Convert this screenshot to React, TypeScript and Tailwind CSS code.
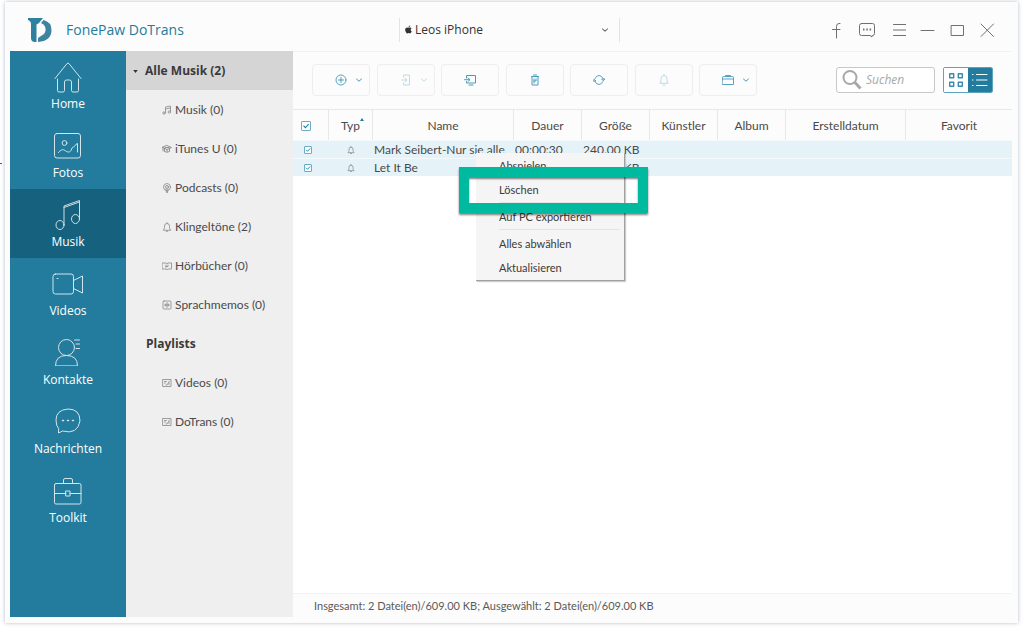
import { useState, type ReactNode } from "react";
import { FaApple } from "react-icons/fa";

const navItems = [
  { name: "Home", icon: <HomeIcon /> },
  { name: "Fotos", icon: <PhotoIcon /> },
  { name: "Musik", icon: <MusicIcon /> },
  { name: "Videos", icon: <VideoIcon /> },
  { name: "Kontakte", icon: <ContactIcon /> },
  { name: "Nachrichten", icon: <MessageIcon /> },
  { name: "Toolkit", icon: <ToolkitIcon /> },
];

const categories = [
  { name: "Musik (0)", icon: <SmallNotes /> },
  { name: "iTunes U (0)", icon: <SmallCap /> },
  { name: "Podcasts (0)", icon: <SmallPodcast /> },
  { name: "Klingeltöne (2)", icon: <Bell /> },
  { name: "Hörbücher (0)", icon: <SmallBook /> },
  { name: "Sprachmemos (0)", icon: <SmallMemo /> },
];

const playlists = ["Videos (0)", "DoTrans (0)"];

const tracks = [
  { name: "Mark Seibert-Nur sie alle", duration: "00:00:30", size: "240.00 KB" },
  { name: "Let It Be", duration: "", size: "369.00 KB" },
];

function Icon({
  size,
  className,
  children,
}: {
  size: number;
  className: string;
  children: ReactNode;
}) {
  return (
    <svg
      viewBox={`0 0 ${size} ${size}`}
      className={className}
      fill="none"
      stroke="currentColor"
      strokeLinecap="round"
      strokeLinejoin="round"
      aria-hidden="true"
    >
      {children}
    </svg>
  );
}

/* Sidebar icons */

function HomeIcon() {
  return (
    <Icon size={32} className="size-8">
      <path d="M3 17.500 15 2.600q1-1 2 0L29 17.500" />
      <path d="M5.500 18v11.500q0 1.500 1.500 1.500h4q1.500 0 1.500-1.500V21q0-2 2-2h3q2 0 2 2v8.500q0 1.500 1.500 1.500h4q1.500 0 1.500-1.500V18" />
    </Icon>
  );
}

function PhotoIcon() {
  return (
    <Icon size={32} className="size-8">
      <rect x="2.500" y="3.500" width="26" height="24.500" rx="2.500" />
      <circle cx="12.500" cy="13" r="2.400" />
      <path d="M6.500 22.500c2.500-3 4.500-3.500 6.500-2s4.500 2.500 6 0 .5-3 2.500-3.500 1.500-3 4-3.500v8.500" />
    </Icon>
  );
}

function MusicIcon() {
  return (
    <Icon size={32} className="size-8">
      <ellipse cx="8" cy="26" rx="4" ry="4.500" />
      <ellipse cx="23.500" cy="20" rx="4" ry="4.500" />
      <path d="M12 26V7l15.500-5.500V20M12 8.500 27.500 3" />
    </Icon>
  );
}

function VideoIcon() {
  return (
    <Icon size={32} className="size-8">
      <rect x="1" y="6" width="20.500" height="20" rx="2.500" />
      <path d="m21.500 12.500 9-4.500v17l-9-4.500M5 10.500h1" />
    </Icon>
  );
}

function ContactIcon() {
  return (
    <Icon size={32} className="size-8">
      <circle cx="14.500" cy="10.500" r="8" />
      <path d="M3.500 28.500q0-10 11-10t11 10ZM22.500 3h5M24 7h3.500M24 11.500h3.500" />
    </Icon>
  );
}

function MessageIcon() {
  return (
    <Icon size={32} className="size-8">
      <path d="M6.500 24.500V27l4-2q15 4 17.500-10Q28 3 16 3 4 4 4 14q0 6 2.500 8.500Z" />
      <path d="M10.500 14.500h1M15.500 14.500h1M20.500 14.500h1" strokeWidth="1.500" />
    </Icon>
  );
}

function ToolkitIcon() {
  return (
    <Icon size={32} className="size-8">
      <rect x="2.500" y="8.500" width="26.500" height="20.500" rx="1.500" />
      <path d="M11.500 8V5q0-1.500 1.500-1.500h6q1.500 0 1.500 1.500v3M2.500 18.500H14M18 18.500h11" />
      <rect x="14" y="16" width="4" height="5" />
    </Icon>
  );
}

/* Small icons of the category list */

function SmallNotes() {
  return (
    <Icon size={10} className="size-[10px]">
      <path d="M3.500 7.500V2l5-1v5.500M3.500 4l5-1" strokeWidth="0.800" />
      <circle cx="2" cy="8" r="1.200" strokeWidth="0.800" />
      <circle cx="7.300" cy="7" r="1.200" strokeWidth="0.800" />
    </Icon>
  );
}

function SmallCap() {
  return (
    <Icon size={10} className="size-[10px]">
      <path d="M5 1.500 9.500 3.500 5 5.500.5 3.500ZM2.500 4.500v3q2.500 1.500 5 0v-3M1 4v3M3 3.500h4M5 5.500v2" strokeWidth="0.900" />
    </Icon>
  );
}

function SmallPodcast() {
  return (
    <Icon size={10} className="size-[10px]">
      <circle cx="5" cy="4" r="3.500" strokeWidth="0.800" />
      <circle cx="5" cy="4" r="1.500" strokeWidth="0.900" />
      <path d="M4 6.500 4.500 9.500h1L6 6.500" strokeWidth="0.900" />
    </Icon>
  );
}

function Bell({ className = "size-[10px]" }: { className?: string }) {
  return (
    <Icon size={10} className={className}>
      <path d="M1.500 8q1-1 1-2.500V4q0-2.500 2.500-2.500T7.500 4v1.500q0 1.500 1 2.500ZM4.300 9.300h1.400M5 .6v.8" strokeWidth="0.800" />
    </Icon>
  );
}

function SmallBook() {
  return (
    <Icon size={10} className="size-[10px]">
      <path d="M.5 2h3.500l1 .7L6 2h3.500v6H6l-1 .7L4 8H.5ZM4 4v2.500M6 4v1.500H4" strokeWidth="0.800" />
    </Icon>
  );
}

function SmallMemo() {
  return (
    <Icon size={10} className="size-[10px]">
      <rect x="1" y="1" width="8" height="8" rx="1" strokeWidth="0.800" />
      <path d="M2.500 5h5M5 2.500v5M3.700 4v2M6.300 4v2" strokeWidth="0.800" />
    </Icon>
  );
}

function SmallPlaylist() {
  return (
    <Icon size={10} className="size-[10px]">
      <rect x="1" y="1.500" width="8" height="7" strokeWidth="0.800" />
      <path d="M2.500 3.500h2M2.500 5h1M4 7h1l2.500-4M7 5v1.500" strokeWidth="0.800" />
    </Icon>
  );
}

/* Toolbar icons */

function Chevron({ className }: { className: string }) {
  return (
    <Icon size={8} className={className}>
      <path d="m1.500 3 2.500 2.200L6.500 3" />
    </Icon>
  );
}

function ToolButton({
  label,
  children,
  menu = false,
  disabled = false,
}: {
  label: string;
  children: ReactNode;
  menu?: boolean;
  disabled?: boolean;
}) {
  return (
    <button
      type="button"
      aria-label={label}
      disabled={disabled}
      className="flex h-8 w-[58px] items-center justify-center gap-2 rounded-sm border border-[#eeeeee] text-[#4a9bbb] disabled:text-[#bcdbe7]"
    >
      <Icon size={12} className={menu ? "ml-4 size-3" : "size-3"}>
        {children}
      </Icon>
      {menu && <Chevron className="size-2" />}
    </button>
  );
}

function Checkbox({ label, className }: { label: string; className: string }) {
  return (
    <span className={`grid ${className}`}>
      <input
        type="checkbox"
        defaultChecked
        aria-label={label}
        className="peer col-start-1 row-start-1 size-full appearance-none rounded-[1px] border border-[#6badc8] bg-white"
      />
      <svg
        viewBox="0 0 9 9"
        className="pointer-events-none invisible col-start-1 row-start-1 size-full text-[#237c9e] peer-checked:visible"
        fill="none"
        stroke="currentColor"
      >
        <path d="M2.200 4.200 4 6l3-3.300" />
      </svg>
    </span>
  );
}

function TitleBar() {
  return (
    <header className="flex h-[49px] shrink-0 items-center pr-[10px] pt-[6px]">
      <div className="flex w-[389px] shrink-0 items-center gap-[14px] pl-[18px]">
        <svg viewBox="0 0 24 24" className="size-6" aria-hidden="true">
          <path
            d="M0 0h15l-4 5-2.500 1.500V24H7q-4 0-4-4V6Q3 3 0 2Z"
            fill="#2f7f9f"
          />
          <path
            d="M15.500 2Q23.500 4 23.500 12 23.500 23 10 24v-4l6-4q2.500-3 1-7.500Q16 6 13 5Z"
            fill="#3d84a1"
          />
        </svg>
        <h1 className="text-[14px] leading-5 text-[#237c9e]">FonePaw DoTrans</h1>
      </div>

      <div className="grid h-6 w-[221px] items-center border-x border-[#e4e4e4] text-[#333333]">
        <FaApple className="pointer-events-none col-start-1 row-start-1 ml-1 size-[9px]" />
        <select
          aria-label="Gerät"
          className="col-start-1 row-start-1 appearance-none bg-transparent pl-[15px] text-[12px] leading-5 outline-none"
        >
          <option>Leos iPhone</option>
        </select>
        <Chevron className="pointer-events-none col-start-1 row-start-1 mr-[10px] size-2 justify-self-end" />
      </div>

      <div className="flex flex-1 justify-end text-[#707070]">
        <WindowButton label="Facebook">
          <path d="M12 2.500h-1q-2.500 0-2.500 3v11.500M4.500 8.500H12" />
        </WindowButton>
        <WindowButton label="Feedback">
          <path d="M3.500 2.500h11q2 0 2 2v8q0 2-2 2H14V16l-2-1.500H3.500q-2 0-2-2v-8q0-2 2-2Z" />
          <path d="M5 8.500h1.500M8.300 8.500h1.500M11.600 8.500h1.500" strokeWidth="2" strokeLinecap="butt" />
        </WindowButton>
        <WindowButton label="Menü">
          <path d="M5.500 3.500H18M5.500 9H18M5.500 14.500H18" />
        </WindowButton>
        <WindowButton label="Minimieren">
          <path d="M3 9.500h13" />
        </WindowButton>
        <WindowButton label="Maximieren">
          <rect x="3.500" y="4.500" width="12" height="10" />
        </WindowButton>
        <WindowButton label="Schließen">
          <path d="m3 3 12.500 12.500M15.500 3 3 15.500" />
        </WindowButton>
      </div>
    </header>
  );
}

function WindowButton({ label, children }: { label: string; children: ReactNode }) {
  return (
    <button type="button" aria-label={label} className="flex w-[30px] justify-center">
      <Icon size={18} className="size-[18px]">
        {children}
      </Icon>
    </button>
  );
}

function Toolbar() {
  return (
    <div className="flex h-[58px] shrink-0 items-center justify-between border-t border-[#f2f2f2] bg-[#fcfcfc] px-[19px] pb-[2px]">
      <div className="flex w-[445px] justify-between">
        <ToolButton label="Hinzufügen" menu>
          <circle cx="6" cy="6" r="5" strokeWidth="0.900" />
          <path d="M3.500 6h5M6 3.500v5" />
        </ToolButton>
        <ToolButton label="Auf Gerät exportieren" menu disabled>
          <path d="M3.500 3V1h6v10h-6V9M1.500 6h5M5 4l2 2-2 2" />
        </ToolButton>
        <ToolButton label="Auf PC exportieren">
          <path d="M2.500 4V1.500h9v7.500h-9V7.500M.5 5.700h5M4 4l2 1.700-2 1.800M5 11h4" />
        </ToolButton>
        <ToolButton label="Löschen">
          <path d="M2.500 2.500h7M4.500 1h3M3 3v8h6V3M5 5v4M7 5v2H5" />
        </ToolButton>
        <ToolButton label="Aktualisieren">
          <path d="M2 4.500Q3.500 1.500 6 1.500T10.500 5M10 7.500Q8.500 10.500 6 10.500T1.500 7M9 5h3l-1.500 1.500ZM0 7h3L1.500 5.500Z" strokeWidth="0.900" />
        </ToolButton>
        <ToolButton label="Klingelton erstellen" disabled>
          <path d="M2 9q1-1 1-3V4.500q0-3 3-3t3 3V6q0 2 1 3ZM5 11h2M6 .5v1" />
        </ToolButton>
        <ToolButton label="Weitere Werkzeuge" menu>
          <path d="M.5 3.500q0-1 1-1h9q1 0 1 1v7H.5ZM3.500 2.500v-1h5v1M.5 5h11" strokeWidth="0.900" />
        </ToolButton>
      </div>

      <div className="flex items-center gap-2">
        <label className="flex h-[26px] w-[99px] items-center gap-1 rounded-[3px] border border-[#c8c8c8] bg-white pl-[5px]">
          <svg
            viewBox="0 0 20 20"
            className="size-5 shrink-0 text-[#a8a8a8]"
            fill="none"
            stroke="currentColor"
            strokeWidth="2"
            aria-hidden="true"
          >
            <circle cx="8" cy="7.500" r="6.500" />
            <path d="m12.500 12 6 6.500" strokeWidth="3" />
          </svg>
          <input
            type="text"
            placeholder="Suchen"
            aria-label="Suchen"
            className="w-full min-w-0 bg-transparent text-[12px] italic leading-5 outline-none placeholder:text-[#a8a8a8]"
          />
        </label>
        <div className="flex h-[26px] w-[50px] overflow-hidden rounded-[2px] border border-[#5ba3bf]">
          <button
            type="button"
            aria-label="Kacheln"
            className="flex flex-1 items-center justify-center bg-white text-[#3a8cad]"
          >
            <Icon size={16} className="size-4">
              <path d="M1.700 1.700h4v4h-4ZM10.300 1.700h4v4h-4ZM1.700 10.300h4v4h-4ZM10.300 10.300h4v4h-4Z" strokeWidth="1.400" />
            </Icon>
          </button>
          <button
            type="button"
            aria-label="Liste"
            className="flex flex-1 items-center justify-center bg-[#237c9e] text-white"
          >
            <Icon size={16} className="size-4">
              <path d="M4.500 2.500H15M4.500 8H15M4.500 13.500H15M.5 2.500h.5M.5 8h.5M.5 13.500h.5" />
            </Icon>
          </button>
        </div>
      </div>
    </div>
  );
}

function TrackTable() {
  const head = "border-r border-[#e8e8e8] font-normal";
  return (
    <table className="w-full table-fixed border-separate border-spacing-0 font-['Lato',sans-serif] text-[12px] text-[#4a4a4a]">
      <thead>
        <tr className="h-[31px] bg-[#fcfcfc] [&>th]:border-t [&>th]:border-t-[#e8e8e8] [&>th]:pt-[2px]">
          <th className={`${head} w-[36px] pl-2`}>
            <Checkbox label="Alle auswählen" className="size-[10px]" />
          </th>
          <th className={`${head} w-[44px]`}>
            <span className="relative">
              Typ
              <svg viewBox="0 0 4 3" className="absolute -right-1 top-0 h-[3px] w-1" aria-hidden="true">
                <path d="M0 3 2 0l2 3Z" fill="#237c9e" />
              </svg>
            </span>
          </th>
          <th className={`${head} w-[141px]`}>Name</th>
          <th className={`${head} w-[68px]`}>Dauer</th>
          <th className={`${head} w-[68px]`}>Größe</th>
          <th className={`${head} w-[68px]`}>Künstler</th>
          <th className={`${head} w-[68px]`}>Album</th>
          <th className={`${head} w-[120px]`}>Erstelldatum</th>
          <th className="font-normal">Favorit</th>
        </tr>
      </thead>
      <tbody>
        {tracks.map((track) => (
          <tr
            key={track.name}
            className="h-[18px] bg-[#e5f3f9] leading-4 [&>td]:whitespace-nowrap [&>td]:border-t [&>td]:border-t-[#f4fafc]"
          >
            <td className="pl-[11px]">
              <Checkbox label={track.name} className="size-2" />
            </td>
            <td className="text-[#777777]">
              <Bell className="mx-auto size-2" />
            </td>
            <td className="pl-px pt-px">{track.name}</td>
            <td className="pl-px pt-px">{track.duration}</td>
            <td className="pl-px pt-px">{track.size}</td>
            <td colSpan={4} />
          </tr>
        ))}
      </tbody>
    </table>
  );
}

function ContextMenu() {
  const item = "block h-6 w-full pl-[23px] text-left";
  return (
    <>
      <div
        role="menu"
        className="absolute left-[183px] top-[102px] w-[149px] border-b border-r border-[#a0a0a0] bg-[#f5f5f5] pt-px font-['Lato',sans-serif] text-[11px] text-[#3a3a3a] shadow-[1px_1px_1px_#cccccc]"
      >
        <button type="button" role="menuitem" className={item}>
          Abspielen
        </button>
        <button type="button" role="menuitem" className={item}>
          Löschen
        </button>
        <hr className="mb-[2px] ml-[23px] mr-1 border-[#e4e4e4]" />
        <button type="button" role="menuitem" className={item}>
          Auf PC exportieren
        </button>
        <hr className="mb-[2px] ml-[23px] mr-1 border-[#e4e4e4]" />
        <button type="button" role="menuitem" className={item}>
          Alles abwählen
        </button>
        <button type="button" role="menuitem" className={item}>
          Aktualisieren
        </button>
      </div>
      {/* Frame around "Löschen" */}
      <div className="pointer-events-none absolute left-[166px] top-[116px] h-[46px] w-[189px] border-[10px] border-[#00baa0] shadow-[0_2px_2px_#00000080,inset_0_2px_2px_#00000080]" />
    </>
  );
}

function CategoryRow({ name, icon }: { name: string; icon: ReactNode }) {
  return (
    <button type="button" className="flex h-[39px] w-full items-center gap-[3px] pl-9">
      <span className="text-[#888888]">{icon}</span>
      {name}
    </button>
  );
}

export default function App() {
  const [active, setActive] = useState("Musik");

  return (
    <div className="flex h-screen bg-white pb-[6px] pl-[5px] pr-[6px] pt-[2px] font-['Open_Sans','Noto_Sans',sans-serif]">
      <div className="flex min-w-0 flex-1 flex-col bg-[#fcfcfc] pb-[6px] pl-[5px] pr-[6px] shadow-[0_0_4px_#b4bcc8]">
        <TitleBar />

        <div className="flex min-h-0 flex-1">
          <nav className="w-[116px] shrink-0 bg-[#237c9e]">
            {navItems.map((item) => (
              <button
                key={item.name}
                type="button"
                onClick={() => setActive(item.name)}
                className={
                  item.name === active
                    ? "flex h-[69px] w-full flex-col items-center gap-px bg-[#15617e] pt-[10px] text-white"
                    : "flex h-[69px] w-full flex-col items-center gap-px pt-[10px] text-white"
                }
              >
                <span className="opacity-80">{item.icon}</span>
                <span className="text-[12px] leading-5">{item.name}</span>
              </button>
            ))}
          </nav>

          <aside className="w-[167px] shrink-0 bg-[#efefef] font-['Lato',sans-serif] text-[12px] text-[#4a4a4a]">
            <button
              type="button"
              className="flex h-[39px] w-full items-center gap-[7px] bg-[#d5d5d5] pl-[7px] pt-px font-['Open_Sans',sans-serif] text-[12px] font-bold text-[#3a3a3a]"
            >
              <svg viewBox="0 0 6 4" className="h-[3px] w-[5px]" aria-hidden="true">
                <path d="M0 0h6L3 4Z" fill="#333333" />
              </svg>
              Alle Musik (2)
            </button>
            {categories.map((category) => (
              <CategoryRow key={category.name} name={category.name} icon={category.icon} />
            ))}
            <h2 className="flex h-[39px] items-center pl-5 font-['Open_Sans',sans-serif] font-bold text-[#3a3a3a]">
              Playlists
            </h2>
            {playlists.map((name) => (
              <CategoryRow key={name} name={name} icon={<SmallPlaylist />} />
            ))}
          </aside>

          <main className="relative flex min-w-0 flex-1 flex-col bg-white">
            <Toolbar />
            <TrackTable />
            <ContextMenu />
            <footer className="mt-auto flex h-6 items-center border-t border-[#f2f2f2] bg-[#fcfcfc] pl-[21px] pt-[2px] font-['Lato',sans-serif] text-[11px] text-[#5a5a5a]">
              Insgesamt: 2 Datei(en)/609.00 KB; Ausgewählt: 2 Datei(en)/609.00 KB
            </footer>
          </main>
        </div>
      </div>
      <span className="absolute left-0 top-[163px] h-px w-[2px] bg-[#5a5f4a]" />
    </div>
  );
}
